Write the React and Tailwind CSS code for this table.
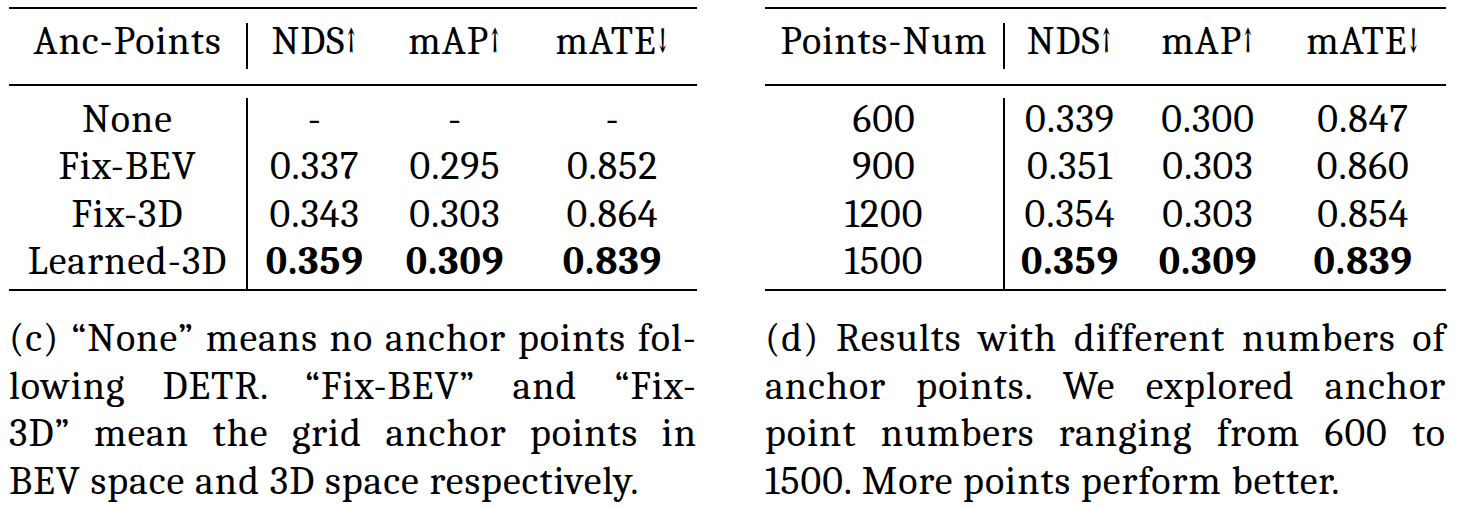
import React from "react";

const left = {
  cols: ["w-[237px]", "w-[134.5px]", "w-[146px]", "w-[169px]"],
  head: ["Anc-Points", "NDS↑", "mAP↑", "mATE↓"],
  rows: [
    ["None", "-", "-", "-"],
    ["Fix-BEV", "0.337", "0.295", "0.852"],
    ["Fix-3D", "0.343", "0.303", "0.864"],
    ["Learned-3D", "0.359", "0.309", "0.839"],
  ],
  caption: [
    "(c) “None” means no anchor points fol-",
    "lowing DETR. “Fix-BEV” and “Fix-",
    "3D” mean the grid anchor points in",
    "BEV space and 3D space respectively.",
  ],
};

const right = {
  cols: ["w-[238px]", "w-[131px]", "w-[145px]", "w-[165.5px]"],
  head: ["Points-Num", "NDS↑", "mAP↑", "mATE↓"],
  rows: [
    ["600", "0.339", "0.300", "0.847"],
    ["900", "0.351", "0.303", "0.860"],
    ["1200", "0.354", "0.303", "0.854"],
    ["1500", "0.359", "0.309", "0.839"],
  ],
  caption: [
    "(d) Results with different numbers of",
    "anchor points. We explored anchor",
    "point numbers ranging from 600 to",
    "1500. More points perform better.",
  ],
};

function Table({ data, width }) {
  const [c1, c2, c3, c4] = data.cols;
  const last = data.rows.length - 1;
  return (
    <div className={width}>
      <div className="h-[2px] bg-black" />
      {/* header */}
      <div className="flex h-[75px]">
        <div className={`${c1} pt-[9px] text-center leading-[47px]`}>{data.head[0]}</div>
        <div className="w-[1.5px] bg-black mt-[14px] mb-[15px]" />
        <div className={`${c2} pt-[9px] text-center leading-[47px]`}>{data.head[1]}</div>
        <div className={`${c3} pt-[9px] text-center leading-[47px]`}>{data.head[2]}</div>
        <div className={`${c4} pt-[9px] text-center leading-[47px]`}>{data.head[3]}</div>
      </div>
      <div className="h-[1.5px] bg-black" />
      {/* body */}
      <div className="flex">
        <div className={`${c1} pt-[10.5px] pb-[4px]`}>
          {data.rows.map((r, i) => (
            <div key={i} className="text-center leading-[47.3px]">{r[0]}</div>
          ))}
        </div>
        <div className="w-[1.5px] bg-black mt-[12.5px]" />
        <div className="pt-[10.5px] pb-[4px]">
          {data.rows.map((r, i) => (
            <div key={i} className={i === last ? "flex font-bold" : "flex"}>
              <div className={`${c2} text-center leading-[47.3px]`}>{r[1]}</div>
              <div className={`${c3} text-center leading-[47.3px]`}>{r[2]}</div>
              <div className={`${c4} text-center leading-[47.3px]`}>{r[3]}</div>
            </div>
          ))}
        </div>
      </div>
      <div className="h-[2px] bg-black" />
      {/* caption */}
      <div className="mt-[24px]">
        {data.caption.map((line, i) => (
          <div
            key={i}
            className={
              i < data.caption.length - 1
                ? "leading-[47.5px] whitespace-nowrap text-justify [text-align-last:justify]"
                : "leading-[47.5px] whitespace-nowrap text-left"
            }
          >
            {line}
          </div>
        ))}
      </div>
    </div>
  );
}

export default function App() {
  return (
    <div className="min-h-screen bg-white text-black font-serif text-[40px] tracking-[1px]">
      <div className="flex pl-[9px] pt-[7px] gap-[68px]">
        <Table data={left} width="w-[688px]" />
        <Table data={right} width="w-[681px]" />
      </div>
    </div>
  );
}
